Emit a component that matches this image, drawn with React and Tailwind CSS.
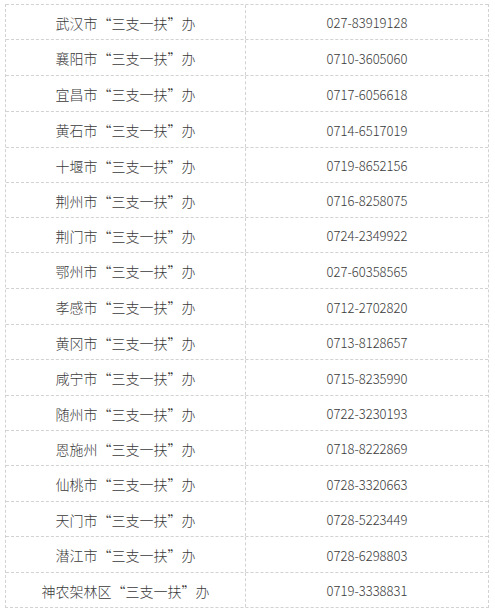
const rows = [
  { name: "武汉市“三支一扶”办", tel: "027-83919128", h: "h-[35px]" },
  { name: "襄阳市“三支一扶”办", tel: "0710-3605060", h: "h-[36px]" },
  { name: "宜昌市“三支一扶”办", tel: "0717-6056618", h: "h-[36px]" },
  { name: "黄石市“三支一扶”办", tel: "0714-6517019", h: "h-[36px]" },
  { name: "十堰市“三支一扶”办", tel: "0719-8652156", h: "h-[35px]" },
  { name: "荆州市“三支一扶”办", tel: "0716-8258075", h: "h-[35px]" },
  { name: "荆门市“三支一扶”办", tel: "0724-2349922", h: "h-[35px]" },
  { name: "鄂州市“三支一扶”办", tel: "027-60358565", h: "h-[36px]" },
  { name: "孝感市“三支一扶”办", tel: "0712-2702820", h: "h-[36px]" },
  { name: "黄冈市“三支一扶”办", tel: "0713-8128657", h: "h-[35px]" },
  { name: "咸宁市“三支一扶”办", tel: "0715-8235990", h: "h-[36px]" },
  { name: "随州市“三支一扶”办", tel: "0722-3230193", h: "h-[35px]" },
  { name: "恩施州“三支一扶”办", tel: "0718-8222869", h: "h-[35px]" },
  { name: "仙桃市“三支一扶”办", tel: "0728-3320663", h: "h-[36px]" },
  { name: "天门市“三支一扶”办", tel: "0728-5223449", h: "h-[35px]" },
  { name: "潜江市“三支一扶”办", tel: "0728-6298803", h: "h-[36px]" },
  { name: "神农架林区“三支一扶”办", tel: "0719-3338831", h: "h-[35px]" },
];

export default function App() {
  return (
    <div className="w-[495px] h-[612px] bg-white pt-[4px] pl-[5px] text-[#3a3a3a] font-['Noto_Sans_CJK_SC',sans-serif]">
      <div className="w-[484px] border-x border-b border-dashed border-[#d2d2d2]">
        {rows.map((r) => (
          <div key={r.name} className={`flex border-t border-dashed border-[#d2d2d2] ${r.h}`}>
            <div className="w-[240px] border-r border-dashed border-[#d2d2d2] flex items-center justify-center pt-[2px] text-[14px] font-light">
              {r.name}
            </div>
            <div className="flex-1 flex items-center justify-center pt-[2px] text-[13px] font-light">
              {r.tel}
            </div>
          </div>
        ))}
      </div>
    </div>
  );
}
